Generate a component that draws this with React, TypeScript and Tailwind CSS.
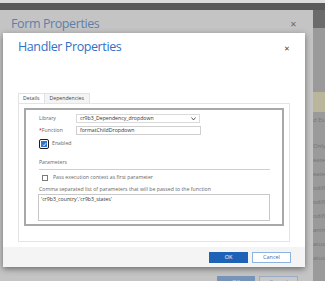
const sideLines = [
  { y: "mt-[4px]", t: "d Ex" },
  { y: "mt-[18px]", t: "Only" },
  { y: "mt-[6px]", t: "eatec" },
  { y: "mt-[6px]", t: "eatec" },
  { y: "mt-[6px]", t: "odifie" },
  { y: "mt-[6px]", t: "odifie" },
  { y: "mt-[6px]", t: "odifie" },
  { y: "mt-[6px]", t: "aning" },
  { y: "mt-[6px]", t: "atus" },
  { y: "mt-[6px]", t: "atus R" },
];

function FormWindow() {
  return (
    <div className="relative flex h-full w-[313px] flex-col bg-[#c4c4c4]">
      <div className="pl-[11px] pt-[6px] text-[12.5px] leading-[16px] tracking-[-0.4px] text-[#5d80ab]">Form Properties</div>
      <div className="pl-[11px] pt-[1px] text-[6px] leading-[8px] text-[#8a8a8a]">Modify the form properties</div>
      <span className="absolute right-[16px] top-[10px] text-[8px] leading-[8px] text-[#6a6a6a]">✕</span>
      <div className="flex-1" />
      <div className="flex h-[5px] items-start justify-end gap-[4px] pr-[15px]">
        <div className="flex h-[12px] w-[38px] items-center justify-center bg-[#7893b8] text-[6px] text-[#d6deea]">OK</div>
        <div className="flex h-[12px] w-[39px] items-center justify-center border border-[#98acc6] bg-[#c9c9c9] text-[6px] text-[#7a8ca6]">Cancel</div>
      </div>
    </div>
  );
}

function SideStrip() {
  return (
    <div className="flex w-[12px] flex-col overflow-hidden bg-[#9a9a9a]">
      <div className="h-[18px] shrink-0 bg-[#6b6b6b]" />
      <div className="mt-[64px] h-[20px] shrink-0 bg-[#b9b69c]" />
      {sideLines.map((l, i) => (
        <div key={i} className={`${l.y} whitespace-nowrap text-[6px] leading-[8px] text-[#757575]`}>
          {l.t}
        </div>
      ))}
    </div>
  );
}

function Checkbox({ checked }: { checked?: boolean }) {
  if (checked) {
    return (
      <div className="flex h-[10px] w-[10px] items-center justify-center rounded-[2px] border-[1.5px] border-[#1d1d1d]">
        <div className="flex h-[6px] w-[6px] items-center justify-center bg-[#2f73d6]">
          <svg width="5" height="5" viewBox="0 0 10 10">
            <path d="M2 5.5 L4 7.5 L8 2.5" stroke="white" strokeWidth="1.8" fill="none" />
          </svg>
        </div>
      </div>
    );
  }
  return <div className="h-[6px] w-[6px] border border-[#7a7a7a] bg-white" />;
}

function HandlerDialog() {
  return (
    <div className="absolute left-[3px] top-[33px] flex h-[234px] w-[302px] flex-col bg-white shadow-[0_2px_6px_rgba(0,0,0,0.45)]">
      <div className="relative h-[60px] shrink-0">
        <div className="pl-[15px] pt-[6px] text-[12.5px] leading-[16px] tracking-[-0.4px] text-[#3370c6]">Handler Properties</div>
        <span className="absolute right-[15px] top-[12px] text-[7px] leading-[7px] text-[#444]">✕</span>
      </div>

      <div className="ml-[15px] flex h-[10px] text-[5.2px] leading-[9px] text-[#444]">
        <div className="border border-b-0 border-[#e2e2e2] bg-white px-[4px]">Details</div>
        <div className="border border-b-0 border-l-0 border-[#e2e2e2] bg-[#f4f4f4] px-[5px]">Dependencies</div>
      </div>

      <div className="mx-[15px] h-[139px] shrink-0 border border-[#e4e4e4] px-[5px] pt-[4px]">
        <div className="flex h-[118px] flex-col border-2 border-[#a8a8a8] pl-[13px] pr-[12px] text-[5.2px] text-[#666]">
          <div className="mt-[4px] flex h-[9px] items-center">
            <span className="w-[37px]">Library</span>
            <div className="flex h-[9px] w-[124px] items-center justify-between border border-[#dadada] pl-[3px] pr-[3px] text-[#333]">
              <span>cr9b3_Dependency_dropdown</span>
              <svg width="5" height="4" viewBox="0 0 10 8">
                <path d="M1 1 L5 6 L9 1" stroke="#333" strokeWidth="1.6" fill="none" />
              </svg>
            </div>
          </div>
          <div className="mt-[3px] flex h-[9px] items-center">
            <span className="w-[37px]">
              <span className="text-[#d0021b]">*</span>Function
            </span>
            <div className="flex h-[9px] w-[125px] items-center border border-[#cfcfcf] pl-[3px] text-[#333]">formatChildDropdown</div>
          </div>
          <div className="mt-[4px] flex h-[10px] items-center gap-[3px]">
            <Checkbox checked />
            <span>Enabled</span>
          </div>
          <div className="mt-[9px] leading-[8px]">Parameters</div>
          <div className="mt-[3px] h-px bg-[#cfcfcf]" />
          <div className="mt-[4px] flex h-[8px] items-center gap-[5px] pl-[3px]">
            <Checkbox />
            <span>Pass execution context as first parameter</span>
          </div>
          <div className="mt-[3px] leading-[8px]">Comma separated list of parameters that will be passed to the function</div>
          <div className="-ml-[1px] mt-[1px] h-[27px] border border-[#c8c8c8] pl-[2px] pt-[1px] leading-[7px] text-[#333]">
            'cr9b3_country','cr9b3_states'
          </div>
        </div>
      </div>

      <div className="mt-[5px] flex h-[20px] justify-end gap-[4px] bg-[#f4f4f4] pr-[14px] pt-[5px]">
        <div className="flex h-[11px] w-[39px] items-center justify-center bg-[#1e62b8] text-[5.5px] text-white">OK</div>
        <div className="flex h-[11px] w-[39px] items-center justify-center border border-[#8db3e2] bg-white text-[5.5px] text-[#3b6fb6]">Cancel</div>
      </div>
    </div>
  );
}

export default function App() {
  return (
    <div className="relative h-[281px] w-[325px] overflow-hidden bg-[#9a9a9a] font-['Open_Sans',sans-serif]">
      <div className="h-[3px] bg-[#dddddd]" />
      <div className="h-[7px] bg-[#5a5a5a]" />
      <div className="flex h-[271px]">
        <FormWindow />
        <SideStrip />
      </div>
      <HandlerDialog />
    </div>
  );
}
